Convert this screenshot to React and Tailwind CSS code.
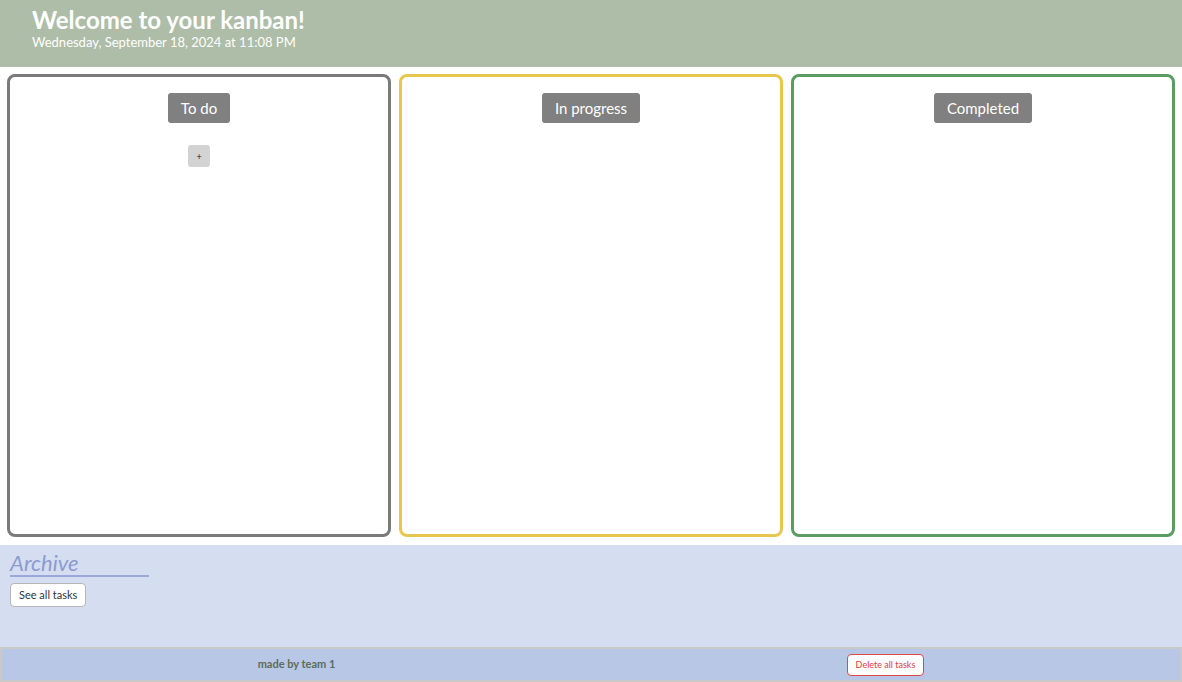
import React from "react";

const columns = [
  { title: "To do", border: "border-[#7a7a7a]", add: true },
  { title: "In progress", border: "border-[#e8c74f]" },
  { title: "Completed", border: "border-[#5a9c62]" },
];

const Column = ({ title, border, add }) => (
  <div className={`flex-1 h-[463px] border-[3px] ${border} rounded-lg flex flex-col items-center pt-4`}>
    <div className="bg-[#808080] text-white text-[15px] leading-[30px] h-[30px] px-[13px] rounded-[3px]">
      {title}
    </div>
    {add && (
      <button className="mt-[22px] w-[22px] h-[22px] bg-[#d3d3d3] rounded-[3px] text-[9px] leading-none text-[#222] flex items-center justify-center">
        +
      </button>
    )}
  </div>
);

export default function App() {
  return (
    <div className="w-full min-h-screen bg-white font-['Trebuchet_MS','Lato','DejaVu_Sans',sans-serif]">
      <header className="h-[67px] bg-[#adbda8] px-8 pt-[5px]">
        <h1 className="text-white text-[24px] font-bold leading-[30px]">Welcome to your kanban!</h1>
        <p className="text-white text-[13px] leading-[15px]">Wednesday, September 18, 2024 at 11:08 PM</p>
      </header>

      <main className="flex gap-2 px-[7px] pt-[7px] pb-2">
        {columns.map((c) => (
          <Column key={c.title} {...c} />
        ))}
      </main>

      <section className="h-[102px] bg-[#d5ddf1] px-[10px] pt-[6px]">
        <h2 className="w-[139px] border-b-2 border-[#9aa9d9] text-[#8b9bd0] italic text-[22px] leading-[24px]">Archive</h2>
        <button className="mt-[6px] h-[24px] px-2 bg-white border border-[#b5b5b5] rounded-[4px] text-[11px] text-[#333]">
          See all tasks
        </button>
      </section>

      <footer className="h-[35px] bg-[#b8c7e6] border-2 border-[#c9c9c9] flex justify-around items-center">
        <span className="text-[11px] font-bold text-[#5d6b5d]">made by team 1</span>
        <button className="h-[22px] px-2 bg-white border border-[#e04848] rounded-[4px] text-[9px] text-[#e03a3a]">
          Delete all tasks
        </button>
      </footer>
    </div>
  );
}
